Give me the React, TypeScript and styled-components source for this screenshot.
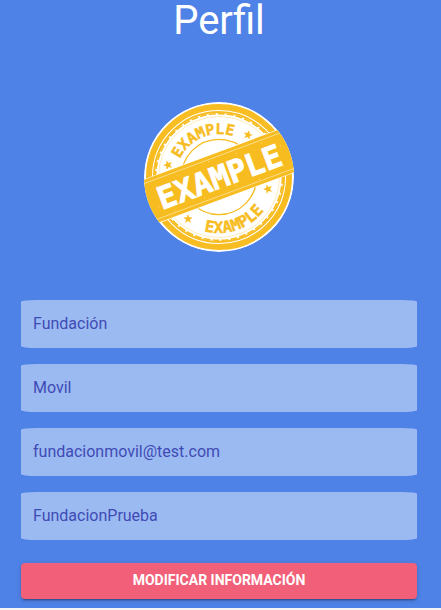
import React, { useState } from "react";
import styled, { createGlobalStyle } from "styled-components";

const GlobalStyle = createGlobalStyle`
  *, *::before, *::after { box-sizing: border-box; }
  body {
    margin: 0;
    background: #f5f5f5;
    font-family: Roboto, "Liberation Sans", sans-serif;
  }
`;

const Page = styled.main`
  display: flex;
  flex-direction: column;
  align-items: center;
  padding: 0 24px 9px 21px;
  background: #4f82e6;
`;

const Title = styled.h1`
  margin: 0;
  color: #fff;
  font-size: 40px;
  font-weight: 400;
  line-height: 42px;
`;

const Avatar = styled.svg`
  display: block;
  width: 150px;
  height: 150px;
  margin: 60px 0 48px;
  border-radius: 50%;
`;

const StampText = styled.text`
  font-family: "DejaVu Sans Mono", monospace;
  font-weight: 700;
  text-anchor: middle;
`;

const Form = styled.form`
  display: flex;
  flex-direction: column;
  gap: 16px;
  width: 100%;
`;

const Field = styled.input`
  width: 100%;
  height: 48px;
  padding: 0 12px 2px;
  border: 0;
  border-radius: 4%;
  outline: 0;
  background: #9cbaf2;
  color: #3f4bb5;
  font: 400 16px Roboto, "Liberation Sans", sans-serif;
`;

const SubmitButton = styled.button`
  height: 36px;
  margin-top: 7px;
  padding: 0 16px 2px;
  border: 0;
  border-radius: 4px;
  background: #f16078;
  box-shadow: 0 3px 1px -2px rgba(0, 0, 0, 0.2), 0 2px 2px 0 rgba(0, 0, 0, 0.14),
    0 1px 5px 0 rgba(0, 0, 0, 0.12);
  color: #fff;
  font: 700 14px Roboto, "Liberation Sans", sans-serif;
  text-transform: uppercase;
  cursor: pointer;
`;

const YELLOW = "#f7bd22";

const stars = [
  { x: 24, y: 63, turn: -20 },
  { x: 104, y: 33, turn: 15 },
  { x: 44, y: 117, turn: 0 },
  { x: 124, y: 87, turn: -20 },
];

const specks = [
  [-62, -12], [-54, 17], [-38, -15], [-21, 16], [-5, -17], [12, 15],
  [24, -15], [37, 17], [51, -16], [64, 13], [68, -7], [-67, 8],
];

function Stamp() {
  return (
    <Avatar viewBox="0 0 150 150" role="img" aria-label="Example">
      <defs>
        <path id="upper-arc" d="M32 75 A43 43 0 0 1 118 75" transform="rotate(-23 75 75)" />
        <path id="lower-arc" d="M19 75 A56 56 0 0 0 131 75" transform="rotate(-19 75 75)" />
      </defs>
      <circle cx="75" cy="75" r="75" fill="#fff" />
      <g fill="none" stroke={YELLOW}>
        <circle cx="75" cy="75" r="70" strokeWidth="6" />
        <circle cx="75" cy="75" r="65" strokeWidth="2" />
        <circle cx="75" cy="75" r="63.4" strokeWidth="1.6" strokeDasharray="7 2" />
        <circle cx="75" cy="75" r="60.5" strokeWidth="0.5" opacity="0.6" />
        <circle cx="75" cy="75" r="37.6" strokeWidth="1.3" />
      </g>
      <g fill={YELLOW} stroke={YELLOW} strokeWidth="0.4">
        <StampText fontSize="15">
          <textPath href="#upper-arc" startOffset="50%">EXAMPLE</textPath>
        </StampText>
        <StampText fontSize="16">
          <textPath href="#lower-arc" startOffset="50%">EXAMPLE</textPath>
        </StampText>
        {stars.map((s) => (
          <path
            key={`${s.x}-${s.y}`}
            transform={`translate(${s.x} ${s.y}) rotate(${s.turn})`}
            d="M0-4.3 1.1-1.4 4.1-1.3 1.7.6 2.5 3.5 0 1.8-2.5 3.5-1.7.6-4.1-1.3-1.1-1.4Z"
          />
        ))}
      </g>
      <g transform="translate(75 74) rotate(-20.4)">
        <rect x="-80" y="-23.2" width="160" height="46.4" fill="#fff" />
        <rect x="-80" y="-22.6" width="160" height="45.2" fill={YELLOW} />
        <path d="M-80-19H80M-80 19H80" stroke="#fff" strokeWidth="0.6" opacity="0.7" />
        <g fill="#fff" opacity="0.6">
          {specks.map(([x, y]) => (
            <circle key={`${x},${y}`} cx={x} cy={y} r="0.5" />
          ))}
        </g>
        <StampText y="12" fontSize="31" fill="#fff" stroke="#fff" strokeWidth="0.8">
          EXAMPLE
        </StampText>
      </g>
    </Avatar>
  );
}

const initialProfile = [
  { name: "nombre", label: "Nombre", type: "text", value: "Fundación" },
  { name: "apellido", label: "Apellido", type: "text", value: "Movil" },
  { name: "correo", label: "Correo", type: "email", value: "fundacionmovil@test.com" },
  { name: "fundacion", label: "Fundación", type: "text", value: "FundacionPrueba" },
];

export default function App() {
  const [profile, setProfile] = useState(initialProfile);
  const update = (name: string, value: string) =>
    setProfile((fields) => fields.map((f) => (f.name === name ? { ...f, value } : f)));

  return (
    <>
      <GlobalStyle />
      <Page>
        <Title>Perfil</Title>
        <Stamp />
        <Form onSubmit={(e: React.FormEvent) => e.preventDefault()}>
          {profile.map((f) => (
            <Field
              key={f.name}
              name={f.name}
              type={f.type}
              aria-label={f.label}
              value={f.value}
              onChange={(e: React.ChangeEvent<HTMLInputElement>) => update(f.name, e.target.value)}
            />
          ))}
          <SubmitButton type="submit">Modificar información</SubmitButton>
        </Form>
      </Page>
    </>
  );
}
